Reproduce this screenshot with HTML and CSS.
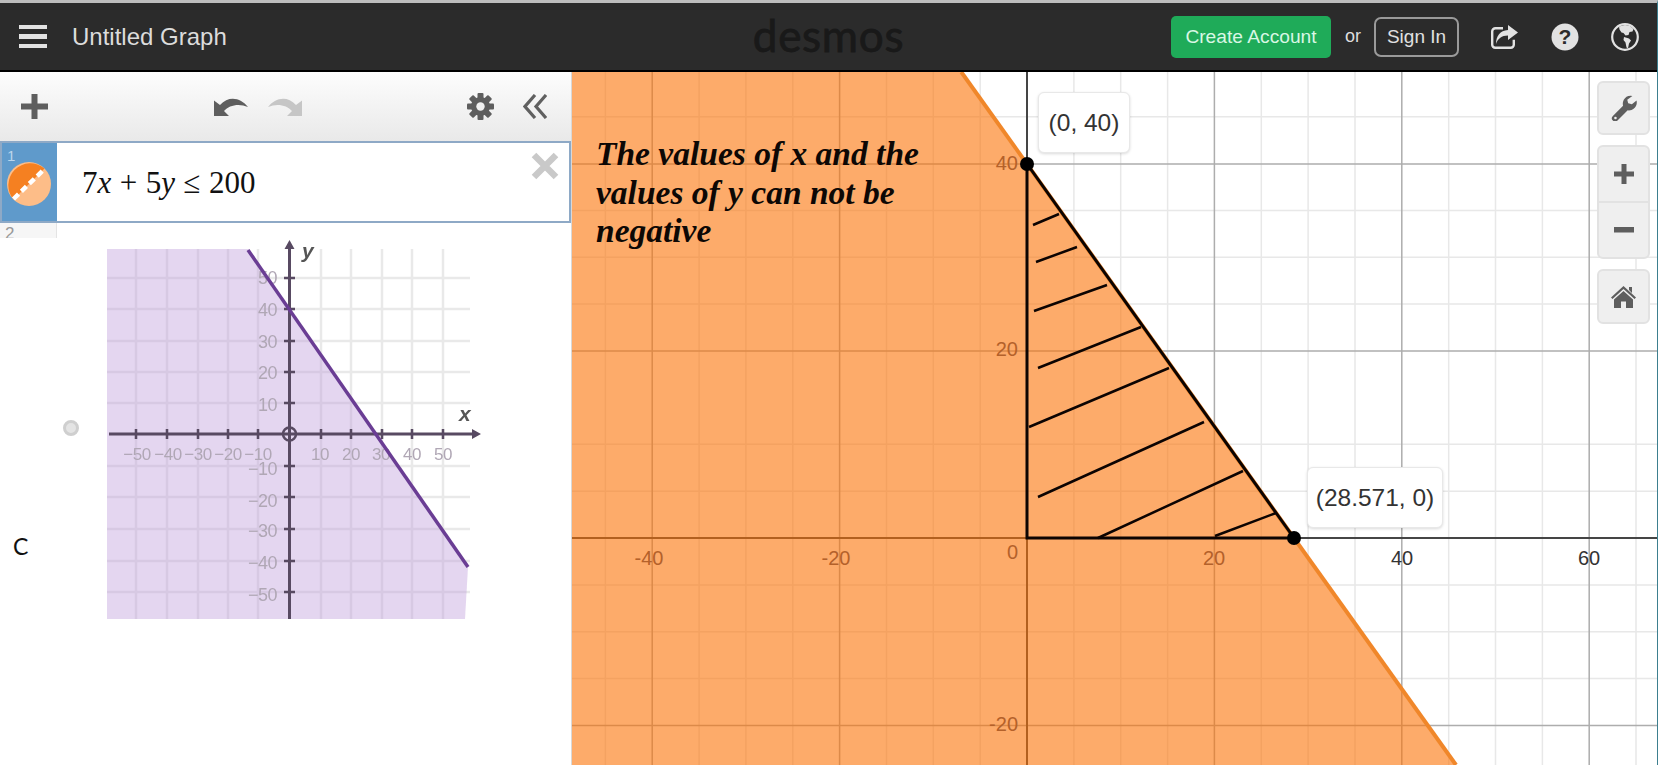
FILE: index.html
```html
<!DOCTYPE html>
<html lang="en">
  <head>
    <meta charset="UTF-8" />
    <title>Untitled Graph - Desmos</title>
    <link rel="stylesheet" href="styles.css">
  </head>
  <body>
    <div class="app">
      <header class="topbar">
        <div class="topbar-left">
          <button class="menu"><span></span><span></span><span></span></button>
          <span class="title">Untitled Graph</span>
        </div>
        <div class="logo">desmos</div>
        <div class="topbar-right">
          <button class="create">Create Account</button>
          <span class="or">or</span>
          <button class="signin">Sign In</button>
          <svg class="share" width="27" height="24" viewBox="0 0 27 24">
            <path d="M12 3.200H4.500a3.300 3.300 0 0 0-3.300 3.300v13.300a3 3 0 0 0 3 3h15.600a3 3 0 0 0 3-3v-5" fill="none" stroke="#e2e2e2" stroke-width="2.400"/>
            <path d="M17 0l10 7.500L17 15v-4.500C10.500 10.500 7 13.500 5 19 5 11 9 5.500 17 5z" fill="#e2e2e2"/>
          </svg>
          <svg class="help" width="28" height="28" viewBox="0 0 28 28">
            <circle cx="14" cy="14" r="13.500" fill="#e2e2e2"/>
            <text x="14" y="21" text-anchor="middle" class="help-mark">?</text>
          </svg>
          <svg class="globe" width="28" height="28" viewBox="0 0 28 28">
            <circle cx="14" cy="14" r="12.800" fill="none" stroke="#e2e2e2" stroke-width="2.200"/>
            <path d="M8 3.500l6-1.500 5 1 3.500 3-1 2.500-3 .5-1 3-3 .5-2-2.500-2-.5-2-3z" fill="#e2e2e2"/>
            <path d="M13 14l5 1.500 2 2-2 3-1 5-1.500-1-1-5-2-2.500z" fill="#e2e2e2"/>
          </svg>
        </div>
      </header>

      <main class="workspace">
        <section class="panel">
          <div class="toolbar">
            <svg class="add" width="27" height="25" viewBox="0 0 27 25"><path d="M10.500 0h6v9.500H27v6H16.500V25h-6v-9.500H0v-6h10.500z"/></svg>
            <svg class="undo" width="34" height="19" viewBox="0 0 34 19"><path d="M0 3.500V19h15l-5-5C15 8 25 6 34 10 27 1 15-2 6 8z"/></svg>
            <svg class="redo" width="34" height="19" viewBox="0 0 34 19"><path d="M34 3.500V19H19l5-5C19 8 9 6 0 10 7 1 19-2 28 8z"/></svg>
            <svg class="gear" width="27" height="27" viewBox="0 0 27 27">
              <rect x="10.500" y="0" width="6" height="27" rx="1"/>
              <rect x="10.500" y="0" width="6" height="27" rx="1" transform="rotate(45 13.500 13.500)"/>
              <rect x="10.500" y="0" width="6" height="27" rx="1" transform="rotate(90 13.500 13.500)"/>
              <rect x="10.500" y="0" width="6" height="27" rx="1" transform="rotate(135 13.500 13.500)"/>
              <circle cx="13.500" cy="13.500" r="9.500"/>
              <circle class="gear-hole" cx="13.500" cy="13.500" r="4.200"/>
            </svg>
            <svg class="collapse" width="24" height="25" viewBox="0 0 24 25">
              <path d="M12 1L2 12.500 12 24M23 1L13 12.500 23 24" fill="none" stroke="#606060" stroke-width="3.200"/>
            </svg>
          </div>

          <div class="expression">
            <div class="expr-tab">
              <span class="expr-num">1</span>
              <svg width="46" height="46" viewBox="0 0 46 46">
                <circle cx="23" cy="23" r="22" fill="#fdbd88"/>
                <path d="M7.500 38.500A22 22 0 0 1 38.500 7.500z" fill="#f58021"/>
                <path d="M7.500 38L39 7.500" stroke="#fff" stroke-width="4.500" stroke-dasharray="7 4"/>
              </svg>
            </div>
            <div class="math">7<i>x</i><span class="op">+</span>5<i>y</i><span class="op">≤</span>200</div>
            <svg class="remove" width="28" height="28" viewBox="0 0 28 28"><path d="M3 3l22 22M25 3L3 25" stroke="#c9c9c9" stroke-width="6.500"/></svg>
          </div>

          <div class="expression-empty">
            <div class="empty-tab">2</div>
          </div>

          <div class="answer">
            <div class="answer-side">
              <span class="radio"></span>
              <span class="choice">C</span>
            </div>
            <svg class="sample" width="385" height="385" viewBox="100 238 385 385">
              <path class="sample-grid" d="M136 249V619M167 249V619M198 249V619M228 249V619M258 249V619M321 249V619M351 249V619M382 249V619M412 249V619M443 249V619M107 278H470M107 309H470M107 341H470M107 372H470M107 403H470M107 466H470M107 497H470M107 529H470M107 561H470M107 592H470"/>
              <polygon class="sample-fill" points="107,249 248,249 468,567 465,619 107,619"/>
              <text class="sample-num" x="137" y="460">−50</text>
              <text class="sample-num" x="168" y="460">−40</text>
              <text class="sample-num" x="198" y="460">−30</text>
              <text class="sample-num" x="228" y="460">−20</text>
              <text class="sample-num" x="258" y="460">−10</text>
              <text class="sample-num" x="320" y="460">10</text>
              <text class="sample-num" x="351" y="460">20</text>
              <text class="sample-num" x="381" y="460">30</text>
              <text class="sample-num" x="412" y="460">40</text>
              <text class="sample-num" x="443" y="460">50</text>
              <g class="sample-end">
                <text x="277" y="284">50</text>
                <text x="277" y="316">40</text>
                <text x="277" y="348">30</text>
                <text x="277" y="379">20</text>
                <text x="277" y="411">10</text>
                <text x="277" y="475">−10</text>
                <text x="277" y="507">−20</text>
                <text x="277" y="537">−30</text>
                <text x="277" y="569">−40</text>
                <text x="277" y="601">−50</text>
              </g>
              <path class="sample-axis" d="M109 434H476M289.500 245V619"/>
              <path class="sample-tick" d="M136 429V439M167 429V439M198 429V439M228 429V439M258 429V439M321 429V439M351 429V439M382 429V439M412 429V439M443 429V439M284 278H295M284 309H295M284 341H295M284 372H295M284 403H295M284 466H295M284 497H295M284 529H295M284 561H295M284 592H295"/>
              <circle class="sample-origin" cx="289.500" cy="434" r="6.500"/>
              <path class="sample-arrow" d="M481 434l-9-5v10zM289.500 240l-5 9h10z"/>
              <line class="sample-line" x1="248" y1="250" x2="468" y2="567"/>
              <text class="sample-var" x="459" y="421">x</text>
              <text class="sample-var" x="302" y="258">y</text>
            </svg>
          </div>
        </section>

        <section class="graph">
          <svg class="plot" width="1085" height="693" viewBox="572 72 1085 693">
            <path class="grid-minor" d="M605.400 72V765M699.100 72V765M745.900 72V765M792.800 72V765M886.500 72V765M933.300 72V765M980.200 72V765M1073.900 72V765M1120.700 72V765M1167.600 72V765M1261.300 72V765M1308.100 72V765M1355 72V765M1448.700 72V765M1495.500 72V765M1542.400 72V765M1636 72V765M572 116.800H1657M572 210.500H1657M572 257.200H1657M572 304H1657M572 444.300H1657M572 491.200H1657M572 584.900H1657M572 631.700H1657M572 678.500H1657"/>
            <path class="grid-major" d="M652.200 72V765M839.600 72V765M1214.400 72V765M1401.800 72V765M1589.200 72V765M572 164H1657M572 351H1657M572 725.400H1657"/>
            <path class="axis" d="M1027 72V765M572 538H1657"/>
            <polygon class="region" points="572,72 961.300,72 1456,765 572,765"/>
            <line class="boundary" x1="961.300" y1="72" x2="1456" y2="765"/>
            <path class="solution" d="M1027 164V538H1294z"/>
            <path class="hatch" d="M1033 225L1059 214M1036 262L1077 247M1034 311L1107 285M1038 368L1141 327M1029 427L1169 368M1038 497L1204 422M1098 538L1243 471M1215 536L1276 513"/>
            <circle class="point" cx="1027" cy="164" r="7"/>
            <circle class="point" cx="1294" cy="538" r="7"/>
            <g class="tick-on-fill">
              <text x="1018" y="170" class="tick-end">40</text>
              <text x="1018" y="356" class="tick-end">20</text>
              <text x="1018" y="731" class="tick-end">-20</text>
              <text x="1018" y="559" class="tick-end">0</text>
              <text x="649" y="565" class="tick-mid">-40</text>
              <text x="836" y="565" class="tick-mid">-20</text>
              <text x="1214" y="565" class="tick-mid">20</text>
            </g>
            <g class="tick-on-white">
              <text x="1402" y="565" class="tick-mid">40</text>
              <text x="1589" y="565" class="tick-mid">60</text>
            </g>
          </svg>

          <p class="note">The values of x and the<br>values of y can not be<br>negative</p>
          <div class="coord coord-top">(0, 40)</div>
          <div class="coord coord-right">(28.571, 0)</div>

          <div class="controls">
            <button class="ctrl ctrl-wrench">
              <svg width="26" height="26" viewBox="0 0 28 28">
                <path d="M23 1a8.500 8.500 0 0 0-10 10.500L2 22.500a3.500 3.500 0 0 0 5 5l11-11A8.500 8.500 0 0 0 27.500 6l-5 4-4-1-1-4z"/>
                <circle cx="4.800" cy="24.800" r="1.400" fill="#efefef"/>
              </svg>
            </button>
            <div class="zoom-group">
              <button class="ctrl ctrl-zoom">
                <svg width="20" height="20" viewBox="0 0 20 20"><path d="M7.500 0h5v7.500H20v5h-7.500V20h-5v-7.500H0v-5h7.500z"/></svg>
              </button>
              <button class="ctrl ctrl-zoom">
                <svg width="20" height="6" viewBox="0 0 20 6"><rect width="20" height="5.500"/></svg>
              </button>
            </div>
            <button class="ctrl ctrl-home">
              <svg width="25" height="22" viewBox="0 0 25 22">
                <path d="M12.500 0L25 11.500 23.500 13 12.500 3 1.500 13 0 11.500zM18 1h3v6l-3-3z"/>
                <path d="M12.500 5L22 13.500V22h-7v-6.500h-5V22H3v-8.500z"/>
              </svg>
            </button>
          </div>
        </section>
      </main>
    </div>
  </body>
</html>
```
FILE: styles.css
```css
:root {
  --dark: #2b2b2b;
  --icon: #5e5e5e;
  --tab: #5f9acb;
}
* {
  margin: 0;
  padding: 0;
  box-sizing: border-box;
  font-family: "Liberation Sans", Arial, sans-serif;
}
html,
body {
  height: 100%;
  overflow: hidden;
  background-color: #fff;
}
button {
  border: none;
  background: none;
}
.app {
  width: 1658px;
  height: 765px;
  display: flex;
  flex-direction: column;
  border-top: 3px solid #bdbdbd;
  border-right: 1px solid #3d7f8f;
}

/* top bar */
.topbar {
  height: 69px;
  display: grid;
  grid-template-columns: 1fr auto 1fr;
  align-items: center;
  background-color: var(--dark);
  border-bottom: 2px solid #000;
  flex-shrink: 0;
}
.topbar-left {
  display: flex;
  align-items: center;
  padding-left: 19px;
  gap: 25px;
}
.menu {
  width: 28px;
  display: flex;
  flex-direction: column;
  gap: 5px;
}
.menu span {
  display: block;
  height: 4.500px;
  background-color: #e2e2e2;
}
.title {
  color: #dcdcdc;
  font-size: 24px;
}
.logo {
  color: #191919;
  font-family: Lato, sans-serif;
  font-size: 44px;
  line-height: 1;
  letter-spacing: 0.7px;
  padding-bottom: 4px;
  -webkit-text-stroke: 0.8px #191919;
}
.topbar-right {
  display: flex;
  align-items: center;
  justify-content: flex-end;
  padding-right: 18px;
}
.create {
  width: 160px;
  height: 42px;
  border-radius: 5px;
  background-color: #1fab59;
  color: #d9f7e4;
  font-size: 19.200px;
}
.or {
  margin-left: 14px;
  color: #dedede;
  font-size: 18px;
}
.signin {
  width: 85px;
  height: 40px;
  margin-left: 13px;
  border: 2px solid #9a9a9a;
  border-radius: 7px;
  color: #e0e0e0;
  font-size: 19px;
}
.share {
  margin-left: 32px;
}
.help {
  margin-left: 33px;
}
.globe {
  margin-left: 32px;
}
.help-mark {
  font-size: 21px;
  font-weight: 700;
  fill: var(--dark);
}

/* left panel */
.workspace {
  flex: 1;
  display: flex;
  min-height: 0;
}
.panel {
  width: 572px;
  flex-shrink: 0;
  background-color: #fff;
  border-right: 1px solid #d8d8d8;
}
.toolbar {
  height: 69px;
  display: flex;
  align-items: center;
  padding: 0 24px 0 21px;
  background: linear-gradient(#fdfdfd, #e9e9e9);
  fill: var(--icon);
}
.undo {
  margin-left: 166px;
}
.redo {
  margin-left: 20px;
  fill: #c6c6c6;
}
.gear {
  margin-left: auto;
}
.gear-hole {
  fill: #f1f1f1;
}
.collapse {
  margin-left: 29px;
}
.expression {
  height: 82px;
  display: flex;
  align-items: center;
  border: 2px solid #8ea9c6;
  background-color: #fff;
}
.expr-tab {
  width: 55px;
  height: 100%;
  padding: 4px 0 0 4px;
  background-color: var(--tab);
}
.expr-num {
  display: block;
  height: 17px;
  margin-left: 1px;
  color: #bcd6ec;
  font-size: 15px;
  line-height: 17px;
}
.expr-tab svg {
  display: block;
  margin-top: -3px;
}
.math {
  margin: 0 0 0 25px;
  color: #111;
  font-family: "Liberation Serif", serif;
  font-size: 31px;
  padding-top: 1px;
}
.math i {
  font-family: "Liberation Serif", serif;
}
.op {
  margin: 0 8.500px;
  font-family: "Liberation Serif", serif;
}
.remove {
  margin-left: auto;
  margin-right: 10px;
  align-self: flex-start;
  margin-top: 9px;
}
.expression-empty {
  height: 15px;
  overflow: hidden;
}
.empty-tab {
  width: 57px;
  height: 15px;
  padding-left: 5px;
  background-color: #f6f6f6;
  border-right: 1px solid #e4e4e4;
  color: #999;
  font-size: 17px;
  line-height: 22px;
}
.answer {
  display: flex;
}
.answer-side {
  width: 100px;
  display: flex;
  flex-direction: column;
  align-items: flex-start;
}
.radio {
  width: 16px;
  height: 16px;
  margin: 182px 0 0 63px;
  border-radius: 50%;
  border: 3px solid #cfcfcf;
  background-color: #e4e4e4;
}
.choice {
  margin: 95px 0 0 13px;
  color: #111;
  font-family: Lato, sans-serif;
  font-size: 23px;
  line-height: 30px;
}

/* sample picture, a bit soft like the pasted image it stands for */
.sample {
  filter: blur(0.6px);
}
.sample-grid {
  fill: none;
  stroke: #e9e9e9;
  stroke-width: 2.500;
}
.sample-fill {
  fill: #bb98d9;
  fill-opacity: 0.4;
}
.sample-num {
  font-size: 17px;
  letter-spacing: -0.5px;
  text-anchor: middle;
  fill: #b0a7b5;
}
.sample-end text {
  font-size: 18px;
  letter-spacing: -0.5px;
  text-anchor: end;
  fill: #b0a7b5;
}
.sample-axis {
  fill: none;
  stroke: #584a62;
  stroke-width: 3;
}
.sample-tick {
  fill: none;
  stroke: #584a62;
  stroke-width: 2.500;
}
.sample-origin {
  fill: none;
  stroke: #584a62;
  stroke-width: 2.500;
}
.sample-arrow {
  fill: #584a62;
}
.sample-line {
  stroke: #6a3d94;
  stroke-width: 3.500;
}
.sample-var {
  font-size: 21px;
  font-weight: 700;
  font-style: italic;
  fill: #555;
}

/* graph */
.graph {
  position: relative;
  flex: 1;
  min-width: 0;
  overflow: hidden;
}
.plot {
  display: block;
}
.grid-minor {
  fill: none;
  stroke: #e8e8e8;
  stroke-width: 1.500;
}
.grid-major {
  fill: none;
  stroke: #adadad;
  stroke-width: 1.500;
}
.axis {
  fill: none;
  stroke: #454545;
  stroke-width: 2;
}
.region {
  fill: #fb7307;
  fill-opacity: 0.6;
}
.boundary {
  stroke: #f0872a;
  stroke-width: 4;
}
.solution {
  fill: none;
  stroke: #0c0402;
  stroke-width: 3;
}
.hatch {
  fill: none;
  stroke: #0c0402;
  stroke-width: 2.500;
}
.point {
  fill: #000;
}
.tick-on-fill text {
  font-size: 20px;
  fill: #b4612a;
}
.tick-on-white text {
  font-size: 20px;
  fill: #333;
}
.tick-end {
  text-anchor: end;
}
.tick-mid {
  text-anchor: middle;
}
.note {
  position: absolute;
  left: 24px;
  top: 63px;
  color: #0d0805;
  font-family: "Liberation Serif", serif;
  font-size: 33.500px;
  font-weight: 700;
  font-style: italic;
  line-height: 38.500px;
}
.coord {
  position: absolute;
  display: flex;
  align-items: center;
  justify-content: center;
  height: 61px;
  color: #333;
  font-size: 24.500px;
  background-color: #fff;
  border: 1px solid #e8e8e8;
  border-radius: 6px;
  box-shadow: 0 1px 3px rgba(0, 0, 0, 0.15);
}
.coord-top {
  left: 466px;
  top: 20px;
  width: 92px;
}
.coord-right {
  left: 735px;
  top: 395px;
  width: 136px;
}
.controls {
  position: absolute;
  right: 7px;
  top: 9px;
  width: 53px;
  display: flex;
  flex-direction: column;
  gap: 10px;
  fill: var(--icon);
}
.ctrl {
  width: 100%;
  display: flex;
  align-items: center;
  justify-content: center;
  background-color: #efefef;
  border: 2px solid #e2e2e2;
  border-radius: 6px;
}
.ctrl-wrench {
  height: 54px;
}
.ctrl-home {
  height: 55px;
}
.zoom-group {
  display: flex;
  flex-direction: column;
}
.ctrl-zoom {
  height: 57px;
}
.ctrl-zoom:first-child {
  border-bottom-width: 1px;
  border-radius: 6px 6px 0 0;
}
.ctrl-zoom:last-child {
  border-top-width: 1px;
  border-radius: 0 0 6px 6px;
}
```
